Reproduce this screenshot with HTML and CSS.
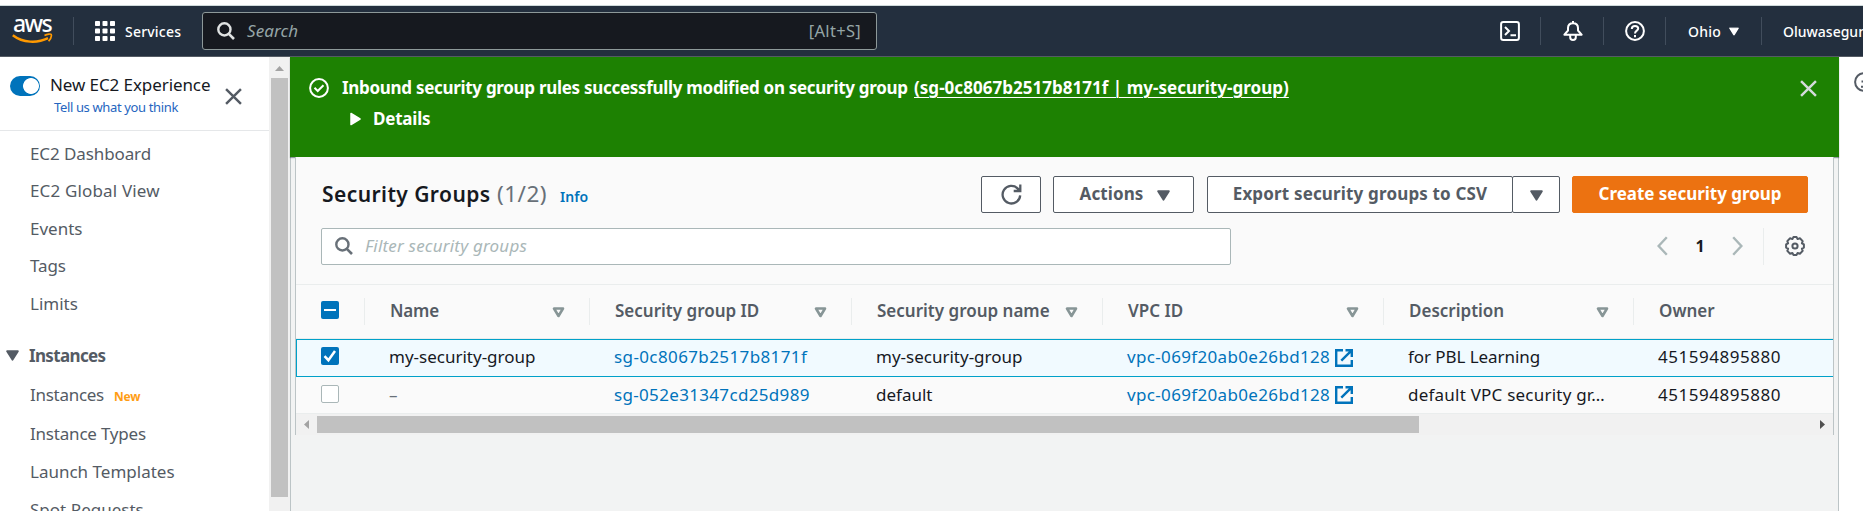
FILE: index.html
```
<!DOCTYPE html>
<html lang="en">
<head>
<meta charset="utf-8">
<title>Security Groups | EC2</title>
<link rel="stylesheet" href="styles.css">
</head>
<body>
<svg class="defs" width="0" height="0">
  <symbol id="search" viewBox="0 0 18 18"><circle cx="7.4" cy="7.4" r="6.1" fill="none" stroke="currentColor" stroke-width="2.4"/><path d="M11.8 11.8L17 17" stroke="currentColor" stroke-width="2.6"/></symbol>
  <symbol id="close" viewBox="0 0 16 16"><path d="M1 1L15 15M15 1L1 15" stroke="currentColor" stroke-width="2.3" fill="none"/></symbol>
  <symbol id="caret" viewBox="0 0 12 10"><path d="M1 1H11L6 9Z" fill="currentColor" stroke="currentColor" stroke-width="1.6" stroke-linejoin="round"/></symbol>
  <symbol id="filter" viewBox="0 0 13 11"><path d="M2 1.5H11L6.5 9Z" fill="none" stroke="currentColor" stroke-width="2.6" stroke-linejoin="round"/></symbol>
  <symbol id="external" viewBox="0 0 18 18"><path d="M8 1.2H1.2V16.8H16.8V11M10.5 1.2H16.8V8M16.4 1.6L6.3 11.7" fill="none" stroke="currentColor" stroke-width="2.4"/></symbol>
</svg>
<header class="topbar">
  <div class="logo"><span class="logo-text">aws</span>
    <svg class="smile" viewBox="0 0 41 11" width="41" height="11"><path d="M.8 2.2C11 10 25 10.6 36 5.2" fill="none" stroke="#f90" stroke-width="2.4"/><path d="M32.5 2.4C35.5 .8 38.8 .8 39.2 1.5C39.7 2.8 38.5 6 36.6 8.2" fill="none" stroke="#f90" stroke-width="1.7"/></svg>
  </div>
  <i class="sep sep-logo"></i>
  <svg class="grid-icon" width="20" height="20" viewBox="0 0 20 20" fill="#fff"><rect width="5" height="5" rx=".8"/><rect x="7.5" width="5" height="5" rx=".8"/><rect x="15" width="5" height="5" rx=".8"/><rect y="7.5" width="5" height="5" rx=".8"/><rect x="7.5" y="7.5" width="5" height="5" rx=".8"/><rect x="15" y="7.5" width="5" height="5" rx=".8"/><rect y="15" width="5" height="5" rx=".8"/><rect x="7.5" y="15" width="5" height="5" rx=".8"/><rect x="15" y="15" width="5" height="5" rx=".8"/></svg>
  <span class="services">Services</span>
  <div class="top-search">
    <svg width="18" height="18"><use href="#search"/></svg>
    <span class="top-placeholder">Search</span>
    <span class="shortcut">[Alt+S]</span>
  </div>
  <svg class="shell-icon" width="20" height="20" viewBox="0 0 20 20" fill="none" stroke="#fff" stroke-width="2"><rect x="1.1" y="1.1" width="17.8" height="17.8" rx="2.2"/><path d="M5 6L9 10L5 14M10.5 14.2H16"/></svg>
  <i class="sep sep-a"></i>
  <svg class="bell-icon" width="20" height="20" viewBox="0 0 20 20" fill="none" stroke="#fff" stroke-width="2" stroke-linejoin="round"><path d="M10 0V2M1.4 13.7L5 9.5V7C5 4 7 2.2 10 2.2S15 4 15 7V9.5L18.6 13.7ZM7.2 14V16.2C7.2 17.9 8.3 19 10 19S12.8 17.9 12.8 16.2V14"/></svg>
  <i class="sep sep-b"></i>
  <svg class="help-icon" width="20" height="20" viewBox="0 0 20 20" fill="none" stroke="#fff" stroke-width="2"><circle cx="10" cy="10" r="8.9"/><path d="M6.8 8C6.8 5.9 8.1 5 10 5S13.2 6.1 13.2 7.6C13.2 9.6 10 9.8 10 12.5M10 14V16.2"/></svg>
  <i class="sep sep-c"></i>
  <span class="region">Ohio</span>
  <svg class="region-caret" width="10" height="9" viewBox="0 0 12 10"><use href="#caret"/></svg>
  <i class="sep sep-d"></i>
  <span class="user">Oluwasegun</span>
</header>
<div class="shell">
  <nav class="sidebar">
    <div class="side-head">
      <span class="toggle"></span>
      <div class="side-title"><div class="experience">New EC2 Experience</div><div class="tell">Tell us what you think</div></div>
      <svg class="side-close" width="17" height="17"><use href="#close"/></svg>
    </div>
    <div class="side-list">
      <a class="n-dash">EC2 Dashboard</a>
      <a class="n-global">EC2 Global View</a>
      <a>Events</a>
      <a class="n-tags">Tags</a>
      <a>Limits</a>
      <div class="side-section"><svg width="13" height="11" viewBox="0 0 12 10"><use href="#caret"/></svg><span>Instances</span></div>
      <div class="sub-list">
        <a class="n-inst">Instances<span class="new">New</span></a>
        <a class="n-types">Instance Types</a>
        <a>Launch Templates</a>
        <a>Spot Requests</a>
      </div>
    </div>
  </nav>
  <div class="v-scroll"><svg width="17" height="21" viewBox="0 0 17 21"><path d="M8.5 9L13 14H4Z" fill="#a3a3a3"/></svg><div class="v-thumb"></div></div>
  <main class="main">
    <section class="banner">
      <svg class="ok-icon" width="20" height="20" viewBox="0 0 20 20" fill="none" stroke="#fff" stroke-width="2"><circle cx="10" cy="10" r="8.9"/><path d="M5.5 9.8L8.7 13L14.5 7.2"/></svg>
      <div class="banner-body">
        <div class="banner-line"><span class="banner-text">Inbound security group rules successfully modified on security group</span> <a class="banner-link">(sg-0c8067b2517b8171f | my-security-group)</a></div>
        <div class="details"><svg width="11" height="14" viewBox="0 0 11 14"><path d="M1 1.5L10 7L1 12.5Z" fill="#fff" stroke="#fff" stroke-width="1.5" stroke-linejoin="round"/></svg><span>Details</span></div>
      </div>
      <svg class="banner-close" width="17" height="17"><use href="#close"/></svg>
    </section>
    <section class="panel">
      <div class="panel-head">
        <h1 class="title">Security Groups</h1><span class="count">(1/2)</span><a class="info">Info</a>
        <div class="actions">
          <button class="btn refresh"><svg width="21" height="21" viewBox="0 0 21 21" fill="none" stroke="currentColor" stroke-width="2.3"><path d="M19.2 11.3A8.8 8.8 0 1 1 16.8 4.6L18.6 6.5M12.7 7H19.3V.6"/></svg></button>
          <button class="btn act"><span>Actions</span><svg width="13" height="11" viewBox="0 0 12 10"><use href="#caret"/></svg></button>
          <div class="split"><button class="btn export">Export security groups to CSV</button><button class="btn drop"><svg width="13" height="11" viewBox="0 0 12 10"><use href="#caret"/></svg></button></div>
          <button class="btn create">Create security group</button>
        </div>
      </div>
      <div class="tools">
        <div class="filter-box"><svg width="18" height="18"><use href="#search"/></svg><span>Filter security groups</span></div>
        <div class="pager">
          <svg width="11" height="20" viewBox="0 0 11 20" fill="none" stroke="#aab7b8" stroke-width="2.4"><path d="M9.8 1.2L1.6 10L9.8 18.8"/></svg>
          <b class="page">1</b>
          <svg width="11" height="20" viewBox="0 0 11 20" fill="none" stroke="#aab7b8" stroke-width="2.4"><path d="M1.2 1.2L9.4 10L1.2 18.8"/></svg>
        </div>
        <i class="tool-sep"></i>
        <svg class="gear" width="20" height="20" viewBox="0 0 20 20" fill="none" stroke="#545b64" stroke-width="2" stroke-linejoin="round"><circle cx="10" cy="10" r="2.6"/><path d="M8.4 1.1H11.6L12.6 3.1L14.9 2.3L17.7 5.1L16.9 7.4L18.9 8.4V11.6L16.9 12.6L17.7 14.9L14.9 17.7L12.6 16.9L11.6 18.9H8.4L7.4 16.9L5.1 17.7L2.3 14.9L3.1 12.6L1.1 11.6V8.4L3.1 7.4L2.3 5.1L5.1 2.3L7.4 3.1Z"/></svg>
      </div>
      <div class="table">
        <div class="row head">
          <div class="cell check"><span class="box some"></span></div>
          <div class="cell"><span class="h-name">Name</span><svg width="13" height="11"><use href="#filter"/></svg></div>
          <div class="cell"><span>Security group ID</span><svg width="13" height="11"><use href="#filter"/></svg></div>
          <div class="cell"><span>Security group name</span><svg width="13" height="11"><use href="#filter"/></svg></div>
          <div class="cell"><span class="h-vpc">VPC ID</span><svg width="13" height="11"><use href="#filter"/></svg></div>
          <div class="cell"><span>Description</span><svg width="13" height="11"><use href="#filter"/></svg></div>
          <div class="cell"><span>Owner</span></div>
        </div>
        <div class="row selected">
          <div class="cell check"><span class="box on"><svg width="18" height="18" viewBox="0 0 18 18"><path d="M3.5 9.2L7.4 13.2L14 4" fill="none" stroke="#fff" stroke-width="2.5"/></svg></span></div>
          <div class="cell">my-security-group</div>
          <div class="cell link sg">sg-0c8067b2517b8171f</div>
          <div class="cell">my-security-group</div>
          <div class="cell link vpc">vpc-069f20ab0e26bd128<svg width="18" height="18"><use href="#external"/></svg></div>
          <div class="cell pbl">for PBL Learning</div>
          <div class="cell num">451594895880</div>
        </div>
        <div class="row second">
          <div class="cell check"><span class="box"></span></div>
          <div class="cell dash">–</div>
          <div class="cell link sg sg-default">sg-052e31347cd25d989</div>
          <div class="cell">default</div>
          <div class="cell link vpc">vpc-069f20ab0e26bd128<svg width="18" height="18"><use href="#external"/></svg></div>
          <div class="cell desc">default VPC security gr…</div>
          <div class="cell num">451594895880</div>
        </div>
      </div>
      <div class="h-scroll"><svg width="21" height="17" viewBox="0 0 21 17"><path d="M13 4V13L8 8.5Z" fill="#a3a3a3"/></svg><div class="h-thumb"></div><svg class="h-right" width="21" height="17" viewBox="0 0 21 17"><path d="M8 4V13L13 8.5Z" fill="#505050"/></svg></div>
    </section>
  </main>
  <aside class="help"><svg width="20" height="20" viewBox="0 0 20 20" fill="none" stroke="#545b64" stroke-width="2"><circle cx="10" cy="10" r="8.9"/><path d="M10 4.8V7M7.5 9.4H10V14.5M7 14.8H13"/></svg></aside>
</div>
</body>
</html>
```
FILE: styles.css
```
* { box-sizing: border-box; }
body { margin: 0; width: 1863px; height: 511px; overflow: hidden; background: #fff; color: #16191f; font: 17px/24px "Noto Sans", "Open Sans", sans-serif; white-space: nowrap; }
svg { display: block; flex: none; }
.defs { display: none; }

.topbar { display: flex; align-items: center; height: 52px; margin-top: 5px; border-top: 1px solid #cfdadb; border-bottom: 1px solid #545b64; background: #232f3e; color: #fff; font-size: 14px; font-weight: 500; overflow: hidden; }
.topbar > * { flex: none; }
.logo { width: 41px; margin-left: 12px; height: 50px; padding-top: 6px; }
.logo-text { display: block; height: 21px; font: 500 23px/22px "Noto Sans", sans-serif; letter-spacing: -1.6px; padding-left: 1px; }
.sep { width: 1px; height: 28px; background: #414d5c; }
.sep-logo { margin-left: 20px; }
.grid-icon { margin-left: 21px; }
.services { margin-left: 10px; width: 57px; letter-spacing: .2px; padding-top: 2px; }
.top-search { display: flex; align-items: center; width: 675px; height: 38px; margin-left: 20px; padding: 0 15px 0 14px; border: 1px solid #8d9999; border-radius: 3px; background: #16191f; color: #e0e3e3; font-size: 17px; font-weight: 400; }
.top-placeholder { margin-left: 12px; font-style: italic; color: #95a5a6; letter-spacing: .1px; }
.shortcut { margin-left: auto; font-size: 16.5px; color: #95a5a6; letter-spacing: .3px; }
.shell-icon { margin-left: 623px; }
.sep-a { margin-left: 20px; }
.bell-icon { margin-left: 22px; }
.sep-b { margin-left: 20px; }
.help-icon { margin-left: 21px; }
.sep-c { margin-left: 20px; }
.region { margin-left: 22px; width: 34px; padding-top: 2px; letter-spacing: .2px; }
.region-caret { margin-left: 7px; }
.sep-d { margin-left: 22px; }
.user { margin-left: 21px; padding-top: 2px; }

.shell { display: flex; height: 454px; }
.sidebar { width: 269px; flex: none; overflow: hidden; color: #545b64; }
.side-head { display: flex; align-items: flex-start; height: 74px; border-bottom: 1px solid #e5e7e9; padding-left: 10px; }
.toggle { flex: none; width: 30px; height: 20px; margin-top: 19px; border-radius: 10px; background: radial-gradient(circle at 21px 10px, #fff 7.5px, #0073bb 8.3px); }
.side-title { flex: none; width: 185px; padding: 16px 0 0 10px; }
.experience { color: #16191f; letter-spacing: -.09px; }
.tell { margin-left: 4px; font-size: 13px; line-height: 20px; letter-spacing: -.36px; color: #2565c0; }
.side-close { margin-top: 31px; }
.side-list { padding-top: 4px; }
.side-list a { display: block; height: 37.5px; line-height: 37px; padding-left: 30px; }
.n-dash { letter-spacing: -.1px; }
.side-list .n-global { letter-spacing: .16px; line-height: 36px; }
.side-list .n-tags { letter-spacing: -.1px; line-height: 36px; }
.side-section { display: flex; align-items: center; height: 38px; margin-top: 14px; padding-left: 6px; font-weight: 700; letter-spacing: -.65px; }
.side-section span { margin-left: 10px; }
.sub-list { padding-top: 1px; }
.side-list .sub-list a { height: 38.5px; line-height: 38px; }
.n-inst { letter-spacing: -.28px; }
.side-list .sub-list .n-types { letter-spacing: -.2px; line-height: 40px; }
.new { margin-left: 10px; font-size: 12px; font-weight: 700; letter-spacing: -.15px; color: #ff9d14; }
.v-scroll { width: 21px; flex: none; padding: 0 2px; background: #f1f1f1; }
.v-thumb { height: 419px; background: #c1c1c1; }

.main { width: 1549px; flex: none; background: #f2f3f3; border: solid #bcc4c6; border-width: 0 1px; }
.banner { display: flex; align-items: flex-start; height: 100px; margin: 0 -1px; padding: 0 22px 0 19px; background: #1d8102; color: #fff; font-weight: 700; box-shadow: 0 1px 1px rgba(0, 28, 36, .4); }
.ok-icon { margin-top: 21px; }
.banner-body { margin-left: 13px; padding-top: 19px; }
.banner-line { display: flex; gap: 5px; height: 24px; }
.banner-text { width: 567px; letter-spacing: -.3px; }
.banner-link { letter-spacing: .03px; text-decoration: underline; text-decoration-thickness: 1px; text-underline-offset: 3px; }
.details { display: flex; align-items: center; height: 24px; margin-top: 7px; padding-left: 8px; letter-spacing: -.2px; }
.details span { margin-left: 12px; }
.banner-close { margin: 23px 0 0 auto; color: #d5dbdb; }

.panel { margin: 0 4px; height: 278px; border: solid #bcc4c6; border-width: 0 1px; background: #fafafa; }
.panel-head { display: flex; align-items: center; height: 71px; padding: 19px 25px 15px 26px; }
.title { margin: -2px 0 0; width: 169px; font-size: 21px; font-weight: 600; letter-spacing: .43px; line-height: 30px; }
.count { width: 51px; margin: -2px 0 0 6px; font-size: 22.5px; letter-spacing: .5px; color: #687078; }
.info { margin: 4px 0 0 12px; font-size: 14px; font-weight: 600; color: #0073bb; letter-spacing: .1px; }
.actions { display: flex; margin-left: auto; }
.btn { display: flex; align-items: center; justify-content: center; height: 37px; margin: 0; padding: 0 0 1px; border: 1px solid #545b64; border-radius: 2px; background: #fff; color: #545b64; font: 700 17px/24px "Noto Sans", sans-serif; letter-spacing: .1px; }
.refresh { width: 60px; padding: 0; }
.act { width: 141px; margin-left: 12px; padding-left: 3px; gap: 14px; }
.act svg { margin-top: 2px; }
.split { display: flex; margin-left: 13px; }
.export { width: 306px; letter-spacing: .16px; }
.drop { width: 48px; margin-left: -1px; padding: 1px 0 0; }
.create { width: 236px; margin-left: 12px; border-color: #ec7211; background: #ec7211; color: #fff; letter-spacing: -.03px; }
.tools { display: flex; align-items: center; height: 57px; padding: 0 28px 20px 25px; border-bottom: 1px solid #eaeded; }
.filter-box { display: flex; align-items: center; width: 910px; height: 37px; padding-left: 13px; border: 1px solid #aab7b8; border-radius: 2px; background: #fff; color: #687078; }
.filter-box span { margin-left: 12px; font-style: italic; letter-spacing: .2px; color: #aab7b8; }
.pager { display: flex; align-items: center; margin-left: auto; }
.page { width: 64px; text-align: center; font-size: 16px; }
.tool-sep { width: 1px; height: 37px; margin: 0 21px 0 20px; background: #eaeded; }

.row { display: grid; grid-template-columns: 68px 225px 262px 251px 281px 250px 199px; }
.cell { display: flex; align-items: center; padding-left: 25px; overflow: hidden; }
.head { height: 54px; color: #545b64; font-weight: 600; border-bottom: 1px solid #eaeded; }
.head .cell { height: 27px; margin-top: 13px; padding: 0 24px 2px 25px; border-left: 1px solid #eaeded; }
.head .check { border: 0; padding-bottom: 4px; }
.head svg { margin: 3px 0 0 auto; color: #879596; }
.h-name { letter-spacing: -.2px; }
.selected { height: 38px; background: #f1faff; border: 1px solid #00a1c9; border-right: 0; grid-template-columns: 67px 225px 262px 251px 281px 250px 199px; }
.selected .cell { padding-bottom: 2px; }
.selected .check { padding: 0 0 4px 24px; }
.second { height: 36px; }
.second .check { padding-bottom: 2px; }
.box { display: block; width: 18px; height: 18px; border-radius: 2px; border: 1px solid #aab7b8; background: #fff; }
.box.on, .box.some { border: 0; background: #0073bb; }
.box.some { background: linear-gradient(#fff, #fff) center / 12px 2px no-repeat #0073bb; }
.link { color: #0073bb; }
.sg { letter-spacing: .39px; }
.sg-default { letter-spacing: .33px; }
.vpc { letter-spacing: .34px; }
.vpc svg { margin-left: 5px; }
.selected .vpc svg { margin-top: 2px; }
.pbl { letter-spacing: -.07px; }
.desc { letter-spacing: .22px; }
.num { letter-spacing: .52px; }
.dash { color: #687078; }
.h-scroll { display: flex; height: 22px; padding-top: 2px; border-top: 1px solid #eaeded; background: #f1f1f1; }
.h-thumb { width: 1102px; height: 17px; background: #c1c1c1; }
.h-right { margin-left: auto; }
.help { width: 24px; overflow: hidden; padding: 15px 0 0 15px; }
```
